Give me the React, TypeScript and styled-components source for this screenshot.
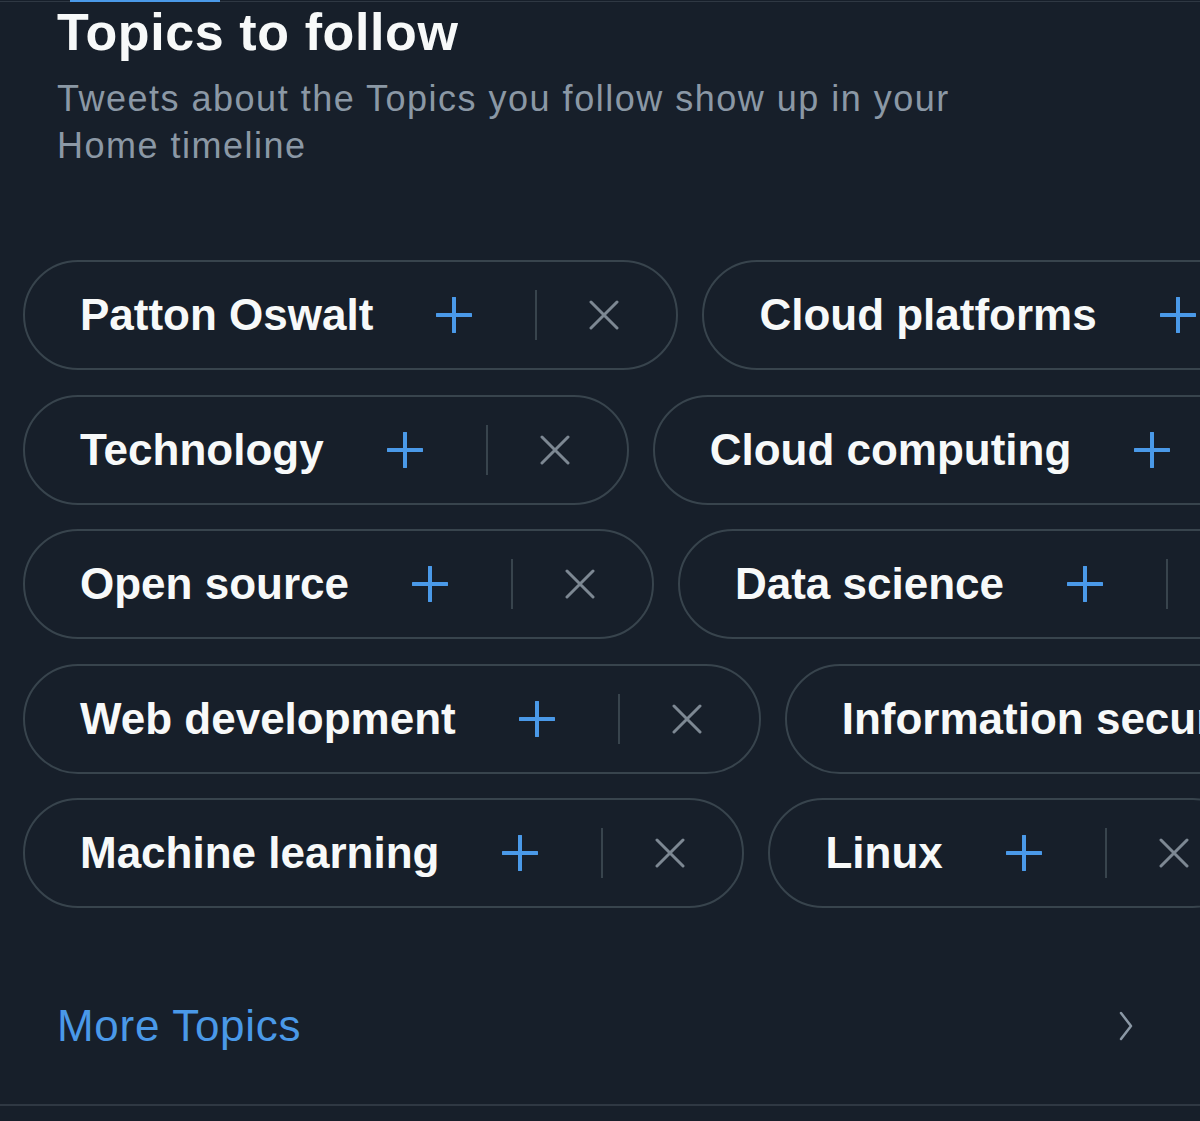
import React from 'react';
import styled, { createGlobalStyle } from 'styled-components';

const GlobalStyle = createGlobalStyle`
    html, body {
        margin: 0;
        padding: 0;
        background: #171f2a;
    }
    body {
        font-family: "Liberation Sans", Arial, sans-serif;
        color: #f7f9f9;
        overflow: hidden;
    }
`;

const Page = styled.div`
    width: 1200px;
    height: 1121px;
    background: #171f2a;
    display: flex;
    flex-direction: column;
`;

const TopRule = styled.div`
    height: 3px;
    background: linear-gradient(#2f3843, #2f3843) 0 1px / 100% 1px no-repeat;
    display: flex;
    padding-left: 70px;
`;

const TabIndicator = styled.div`
    width: 150px;
    height: 2px;
    background: #4a99e8;
`;

const Header = styled.div`
    padding: 0 57px;
    display: flex;
    flex-direction: column;
`;

const Title = styled.h1`
    margin: 0;
    font-size: 52px;
    line-height: 58px;
    font-weight: 700;
    letter-spacing: 0.6px;
    color: #f7f9f9;
`;

const Subtitle = styled.p`
    margin: 14px 0 0;
    width: 960px;
    font-size: 36px;
    line-height: 47px;
    letter-spacing: 1.5px;
    color: #8b98a5;
`;

const Rows = styled.div`
    margin-top: 91px;
    display: flex;
    flex-direction: column;
    gap: 24.5px;
`;

const Row = styled.div`
    display: flex;
    gap: 24px;
    padding-left: 23px;
    overflow: hidden;
`;

const Pill = styled.div`
    flex-shrink: 0;
    height: 110px;
    box-sizing: border-box;
    border: 2px solid #38444d;
    border-radius: 55px;
    padding: 0 57px 0 55px;
    display: flex;
    align-items: center;
    white-space: nowrap;
`;

const PillLabel = styled.span`
    font-size: 44px;
    font-weight: 700;
    color: #f7f9f9;
    margin-right: 63px;
`;

const Divider = styled.span`
    width: 2px;
    height: 50px;
    background: #38444d;
    margin: 0 52px 0 63px;
`;

const MoreRow = styled.div`
    margin-top: 59px;
    height: 118px;
    padding: 0 67px 0 57px;
    display: flex;
    align-items: center;
    justify-content: space-between;
`;

const MoreLink = styled.span`
    font-size: 44px;
    letter-spacing: 0.7px;
    color: #4a99e8;
`;

const BottomRule = styled.div`
    margin-top: 19px;
    height: 2px;
    background: #2f3843;
`;

const PlusIcon = () => (
    <svg width="36" height="36" viewBox="0 0 36 36">
        <path d="M18 1v34M1 18h34" stroke="#4a99e8" strokeWidth="4" strokeLinecap="round" />
    </svg>
);

const CloseIcon = () => (
    <svg width="30" height="30" viewBox="0 0 30 30">
        <path d="M2 2l26 26M28 2L2 28" stroke="#7d8893" strokeWidth="3" strokeLinecap="round" />
    </svg>
);

const Chevron = () => (
    <svg width="14" height="30" viewBox="0 0 14 30">
        <path d="M2 2l10 13L2 28" fill="none" stroke="#8b98a5" strokeWidth="2.5" strokeLinecap="round" strokeLinejoin="round" />
    </svg>
);

function Topic({ name }: { name: string }) {
    return (
        <Pill>
            <PillLabel>{name}</PillLabel>
            <PlusIcon />
            <Divider />
            <CloseIcon />
        </Pill>
    );
}

const rows: string[][] = [
    ['Patton Oswalt', 'Cloud platforms'],
    ['Technology', 'Cloud computing'],
    ['Open source', 'Data science'],
    ['Web development', 'Information security'],
    ['Machine learning', 'Linux'],
];

export default function App() {
    return (
        <Page>
            <GlobalStyle />
            <TopRule>
                <TabIndicator />
            </TopRule>
            <Header>
                <Title>Topics to follow</Title>
                <Subtitle>Tweets about the Topics you follow show up in your Home timeline</Subtitle>
            </Header>
            <Rows>
                {rows.map((row, i) => (
                    <Row key={i}>
                        {row.map(name => <Topic key={name} name={name} />)}
                    </Row>
                ))}
            </Rows>
            <MoreRow>
                <MoreLink>More Topics</MoreLink>
                <Chevron />
            </MoreRow>
            <BottomRule />
        </Page>
    );
}
